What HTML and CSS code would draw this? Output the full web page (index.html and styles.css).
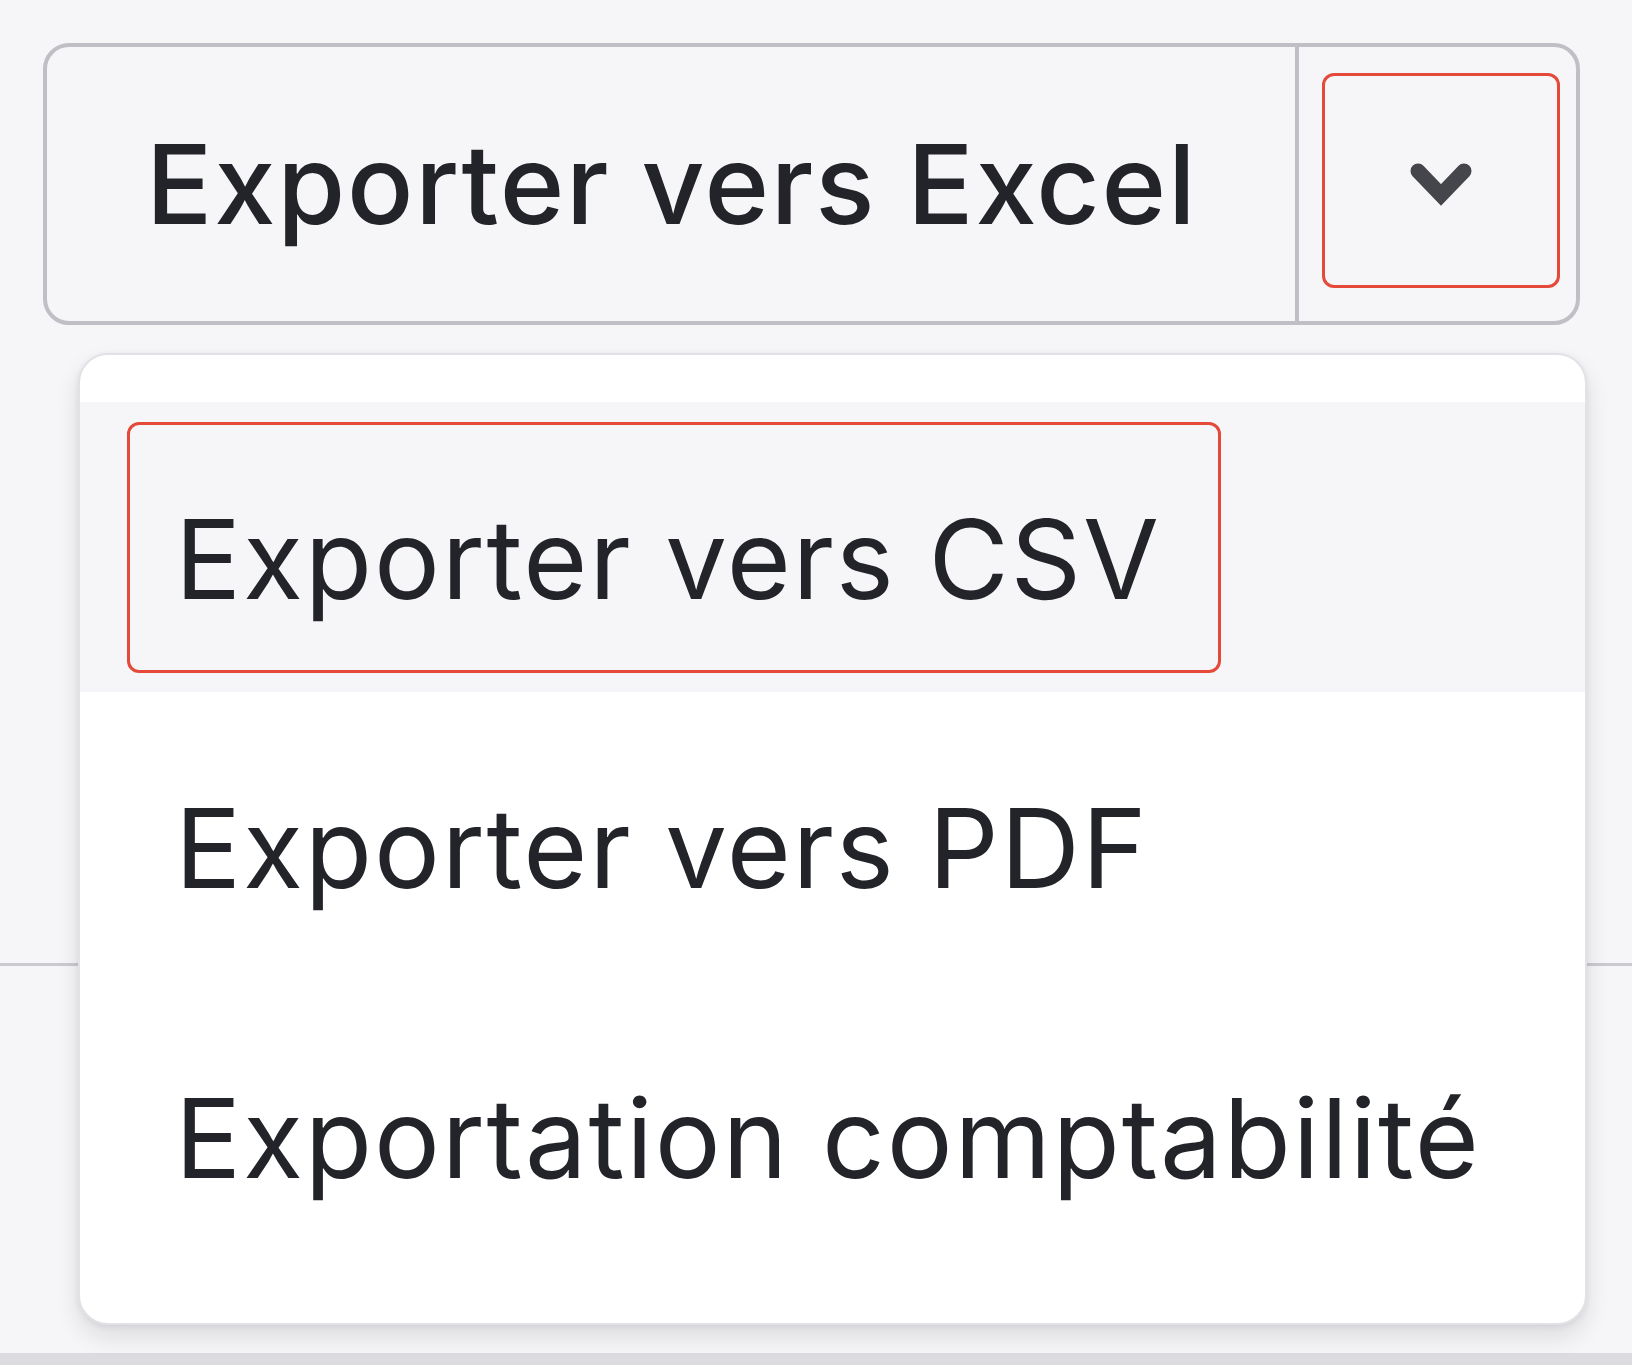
FILE: index.html
```html
<!DOCTYPE html>
<html lang="fr">
<head>
    <meta charset="UTF-8">
    <meta name="viewport" content="width=device-width, initial-scale=1.0">
    <link rel="stylesheet" href="styles.css">
</head>
<body>

<div class="page-top">
    <div class="export">
        <div class="split">
            <button class="split-main">Exporter vers Excel</button>
            <button class="split-toggle">
                <span class="focus-box">
                    <svg class="chevron" viewBox="0 0 64 48" width="64" height="48">
                        <path d="M9 11 L32 35 L55 11" fill="none" stroke="currentColor" stroke-width="15" stroke-linecap="round" stroke-linejoin="miter"/>
                    </svg>
                </span>
            </button>
        </div>

        <ul class="menu">
            <li class="menu-item active"><span class="focus-box">Exporter vers CSV</span></li>
            <li class="menu-item"><span class="label">Exporter vers PDF</span></li>
            <li class="menu-item"><span class="label">Exportation comptabilité</span></li>
        </ul>
    </div>
</div>
<div class="page-bottom"></div>
<div class="page-strip"></div>

</body>
</html>
```

FILE: styles.css
```css
html, body {
    margin: 0;
    padding: 0;
}

body {
    font-family: Inter, 'Noto Sans', sans-serif;
    background-color: #f6f6f8;
    color: #232429;
    overflow: hidden;
}

.page-top {
    height: 963px;
    border-bottom: 3px solid #cbcbcf;
    box-sizing: content-box;
}

.page-bottom {
    height: 387px;
}

.page-strip {
    height: 12px;
    background-color: #dcdce0;
}

.export {
    position: relative;
    padding: 43px 0 0 43px;
}

.split {
    display: flex;
    width: 1537px;
    height: 282px;
    box-sizing: border-box;
    border: 4px solid #bfbfc5;
    border-radius: 26px;
    background-color: #f6f6f8;
    overflow: hidden;
}

.split button {
    font-family: inherit;
    background: none;
    border: none;
    margin: 0;
    color: inherit;
}

.split-main {
    flex: 1;
    text-align: left;
    padding: 0 0 0 99px;
    font-size: 110px;
    font-weight: 500;
    color: #212227;
    letter-spacing: 1.8px;
}

.split-toggle {
    width: 281px;
    border-left: 4px solid #bfbfc5 !important;
    display: flex;
    align-items: center;
    justify-content: center;
    padding: 0;
}

.split-toggle .focus-box {
    display: flex;
    align-items: center;
    justify-content: center;
    width: 238px;
    height: 215px;
    box-sizing: border-box;
    margin: -7px -6px 0 0;
}

.chevron {
    color: #45464c;
    display: block;
    margin-top: 6px;
}

.focus-box {
    border: 3px solid #e5493a;
    border-radius: 12px;
}

.menu {
    position: absolute;
    top: 353px;
    left: 78px;
    width: 1509px;
    box-sizing: border-box;
    margin: 0;
    padding: 47px 0 51px;
    list-style: none;
    background-color: #fff;
    border: 2px solid #e2e2e6;
    border-radius: 30px;
    box-shadow: 0 12px 24px rgba(20, 20, 40, 0.11), 0 2px 6px rgba(20, 20, 40, 0.07);
}

.menu-item {
    height: 290px;
    display: flex;
    align-items: center;
    font-size: 110px;
    font-weight: 400;
    color: #232429;
    letter-spacing: 1.8px;
}

.menu-item.active {
    background-color: #f6f6f8;
}

.menu-item .label {
    padding: 22px 0 0 95px;
}

.menu-item .focus-box {
    display: flex;
    align-items: center;
    height: 251px;
    box-sizing: border-box;
    margin: 1px 0 0 47px;
    padding: 22px 57px 0 45px;
}
```
